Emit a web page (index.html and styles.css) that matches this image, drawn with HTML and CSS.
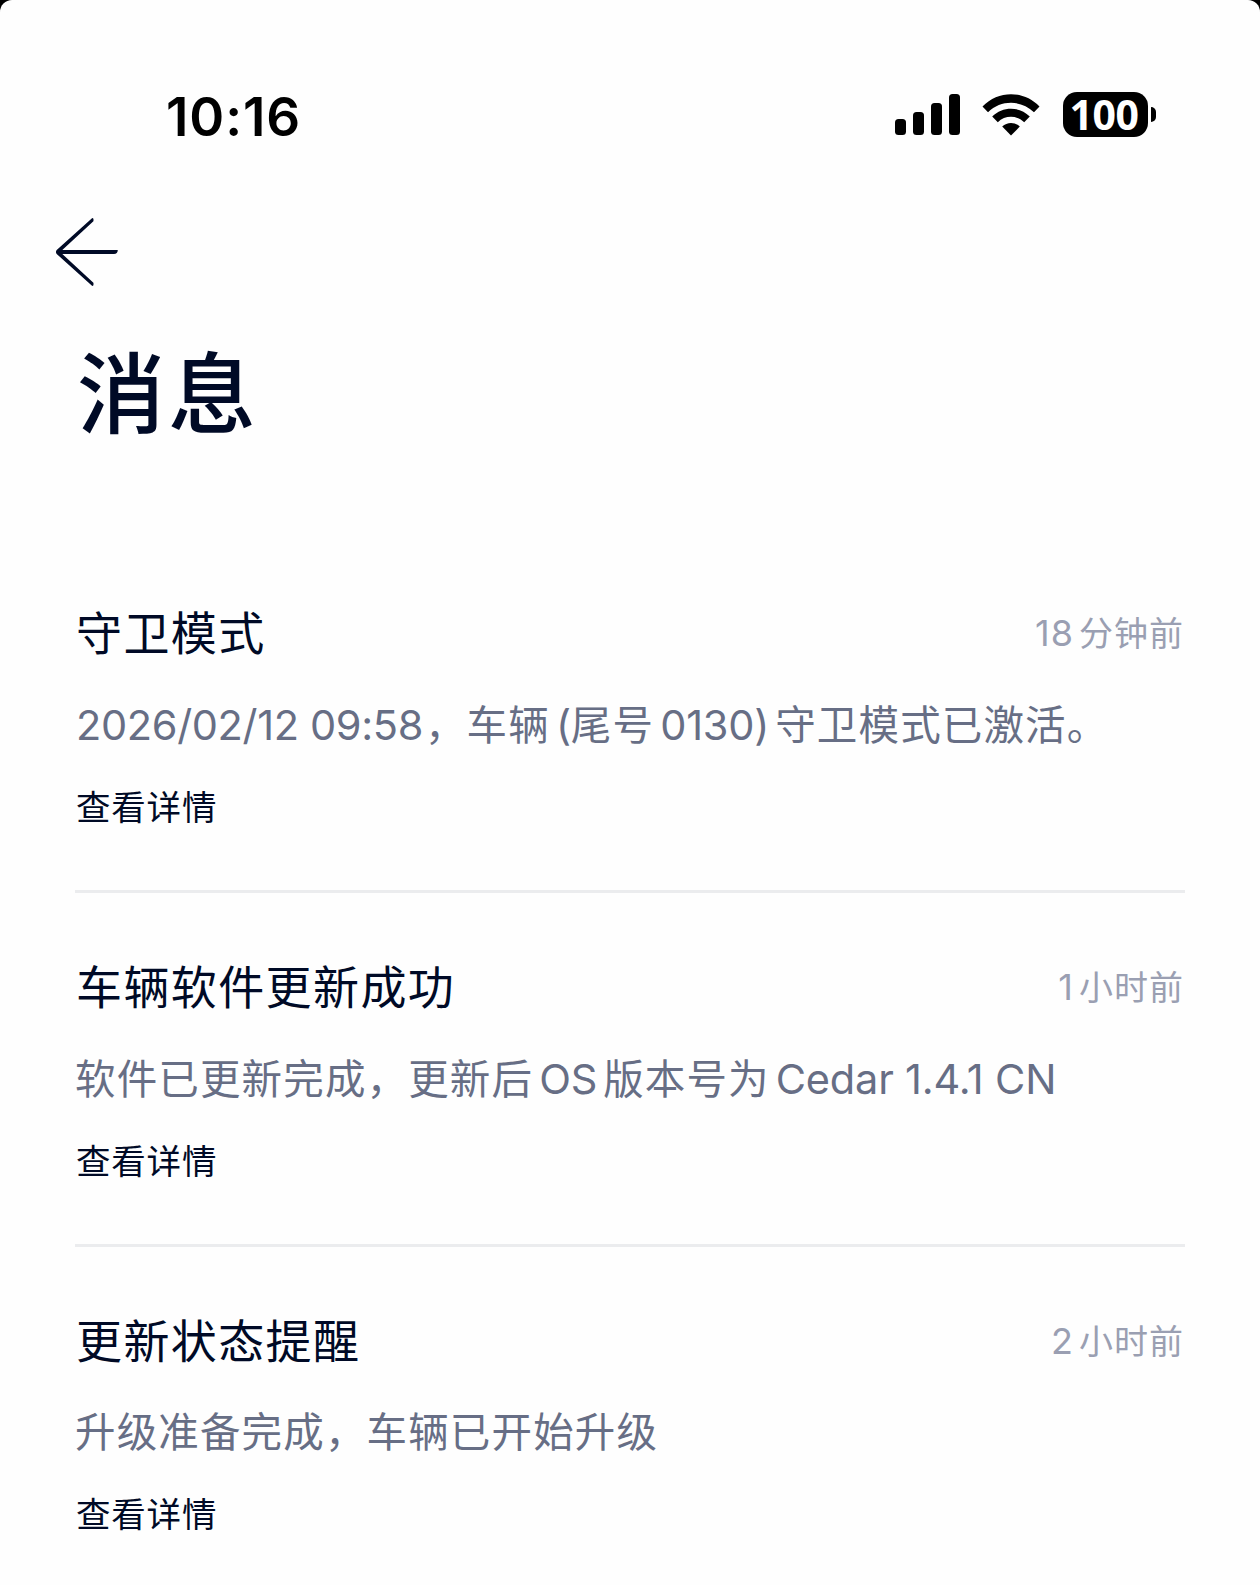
FILE: index.html
```html
<!DOCTYPE html>
<html lang="zh-CN">
<head>
    <meta charset="UTF-8">
    <title>消息</title>
    <link rel="stylesheet" href="styles.css">
</head>
<body>
    <div class="screen">
        <div class="status-bar">
            <span class="time">10:16</span>
            <div class="status-icons">
                <svg class="signal" width="65" height="41" viewBox="0 0 65 41">
                    <rect x="0" y="25" width="11" height="16" rx="3.5"/>
                    <rect x="18" y="18" width="11" height="23" rx="3.5"/>
                    <rect x="36" y="9" width="11" height="32" rx="3.5"/>
                    <rect x="54" y="0" width="11" height="41" rx="3.5"/>
                </svg>
                <svg class="wifi" width="58" height="42" viewBox="0 0 58 42">
                    <path d="M0.5 12.5C16-4 42-4 57.5 12.5L52 18.2C39 5.6 19 5.6 6 18.2Z"/>
                    <path d="M10.2 22.6C20.6 12 37.4 12 47.8 22.6L42.2 28.3C35 21 23 21 15.8 28.3Z"/>
                    <path d="M20.2 32.6C25 27.8 33 27.8 37.8 32.6L29 41.6Z"/>
                </svg>
                <div class="battery">100</div>
                <div class="battery-cap"></div>
            </div>
        </div>

        <div class="nav">
            <svg class="back" width="64" height="70" viewBox="0 0 64 70">
                <path d="M36 1.2Q38 0.6 37.4 4.2L6.3 33H61.8Q61.6 37 58 37H6.3L37.4 65.8Q38 69.4 36 68.8L0.7 37Q-0.8 35 0.7 33Z"/>
            </svg>
        </div>

        <h1>消息</h1>

        <div class="list">
            <div class="item">
                <div class="item-head">
                    <h2>守卫模式</h2>
                    <span class="ago"><span class="num">18</span>分钟前</span>
                </div>
                <p><span class="date">2026/02/12 09:58</span>，车辆<span class="en gap-l">(</span>尾号<span class="en gap">0130)</span>守卫模式已激活。</p>
                <a class="detail">查看详情</a>
            </div>
            <div class="item">
                <div class="item-head">
                    <h2>车辆软件更新成功</h2>
                    <span class="ago"><span class="num">1</span>小时前</span>
                </div>
                <p>软件已更新完成，更新后<span class="en gap">OS</span>版本号为<span class="en gap-l">Cedar 1.4.1 CN</span></p>
                <a class="detail">查看详情</a>
            </div>
            <div class="item">
                <div class="item-head">
                    <h2>更新状态提醒</h2>
                    <span class="ago"><span class="num">2</span>小时前</span>
                </div>
                <p>升级准备完成，车辆已开始升级</p>
                <a class="detail">查看详情</a>
            </div>
        </div>
    </div>
</body>
</html>
```

FILE: styles.css
```css
* {
    box-sizing: border-box;
}

body {
    margin: 0;
    background: #000;
    font-family: Inter, "Noto Sans CJK SC", sans-serif;
    color: #000a26;
}

.screen {
    height: 1585px;
    background: #fefefe;
    border-radius: 12px 12px 0 0;
    overflow: hidden;
}

.status-bar {
    display: flex;
    justify-content: space-between;
    align-items: center;
    height: 180px;
    padding: 49px 104px 0 166px;
    color: #000;
}

.time {
    padding-top: 4px;
    font-size: 53px;
    font-weight: 600;
    line-height: 60px;
    letter-spacing: 0.9px;
}

.status-icons {
    display: flex;
    align-items: center;
}

.wifi {
    margin-left: 22px;
}

.battery {
    width: 85px;
    height: 45px;
    margin-left: 23px;
    padding-right: 3px;
    border-radius: 14px;
    background: #000;
    color: #fff;
    font-family: "Noto Sans", sans-serif;
    font-size: 41px;
    font-weight: 700;
    line-height: 44px;
    text-align: center;
    letter-spacing: -0.5px;
}

.battery-cap {
    width: 5px;
    height: 15px;
    margin-left: 3px;
    border-radius: 0 6px 6px 0;
    background: #000;
}

.nav {
    display: flex;
    align-items: center;
    height: 144px;
    padding-left: 56px;
}

.back {
    fill: #000a26;
}

h1 {
    margin: 5px 0 80px 77px;
    font-size: 88px;
    font-weight: 500;
    line-height: 130px;
    letter-spacing: 3px;
}

.list {
    padding: 0 75px;
}

.item {
    height: 354px;
    padding-top: 64px;
    border-bottom: 3px solid #ebecee;
}

.item:last-child {
    border-bottom: none;
}

.item-head {
    display: flex;
    justify-content: space-between;
    height: 60px;
}

h2 {
    margin: 0;
    padding-left: 1px;
    font-size: 46px;
    font-weight: 400;
    line-height: 61px;
    letter-spacing: 1.4px;
}

.ago {
    padding-right: 1px;
    color: #9a9fb2;
    font-size: 34px;
    line-height: 61px;
    letter-spacing: 1px;
}

.num {
    margin-right: 5px;
    font-size: 36px;
}

p {
    margin: 32px 0 27px;
    color: #676e85;
    font-size: 40.5px;
    line-height: 60px;
    letter-spacing: 1.15px;
    white-space: nowrap;
}

.date {
    padding-left: 1px;
    margin-right: 2px;
    font-size: 41.5px;
    letter-spacing: -0.35px;
}

.en {
    font-size: 41.5px;
    letter-spacing: -0.2px;
}

.gap {
    margin: 0 6px;
}

.gap-l {
    margin-left: 6px;
}

.detail {
    display: block;
    padding-left: 1px;
    font-size: 34.5px;
    line-height: 50px;
    letter-spacing: 0.8px;
}
```
